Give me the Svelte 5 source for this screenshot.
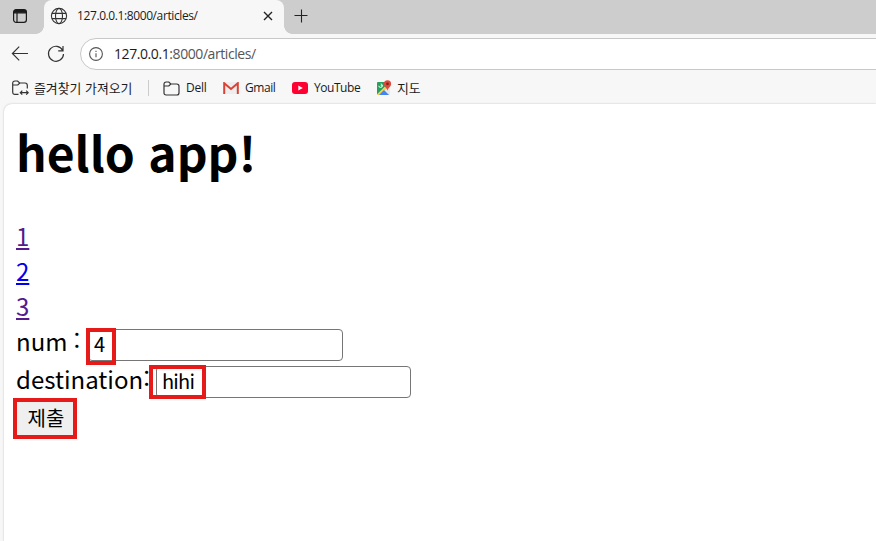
<script>
  const articles = [
    { id: 1, visited: true },
    { id: 2, visited: false },
    { id: 3, visited: true }
  ];
  let num = $state('4');
  let destination = $state('hihi');
</script>

<div class="browser">
  <header class="tabs">
    <svg class="workspace" width="16" height="16" viewBox="0 0 16 16" fill="none" stroke="#1b1b1b" stroke-width="1.2">
      <rect x="1.6" y="1.6" width="12.8" height="12.8" rx="2.6" />
      <path d="M2 3.4Q2 2 4 2h8q2 0 2 1.4v1.4H2z" fill="#1b1b1b" />
      <path d="M5 5v9" />
    </svg>
    <div class="tab">
      <svg width="18" height="18" viewBox="0 0 18 18" fill="none" stroke="#333" stroke-width="1.1">
        <circle cx="9" cy="9" r="7.6" />
        <ellipse cx="9" cy="9" rx="3.5" ry="7.6" />
        <path d="M2 6.4h14M2 11.6h14" />
      </svg>
      <span class="tab-title">127.0.0.1:8000/articles/</span>
      <svg class="close" width="10" height="10" viewBox="0 0 10 10" stroke="#222" stroke-width="1.4"><path d="M1 1l8 8M9 1L1 9" /></svg>
    </div>
    <svg class="plus" width="14" height="14" viewBox="0 0 14 14" stroke="#222" stroke-width="1.1"><path d="M7.5 .5v13M.5 6.5h13" /></svg>
  </header>

  <nav class="toolbar">
    <svg class="back" width="18" height="16" viewBox="0 0 18 16" fill="none" stroke="#333" stroke-width="1.2"><path d="M17 7.5H1.500M8.200 .7L1.400 7.500l6.800 6.800" /></svg>
    <svg class="reload" width="18" height="18" viewBox="0 0 18 18" fill="none" stroke="#333" stroke-width="1.2"><path d="M15.700 5.400A7.500 7.500 0 1 0 16.500 9M16 1v4.800h-4.800" /></svg>
    <div class="address">
      <svg width="14" height="14" viewBox="0 0 14 14" fill="none" stroke="#555" stroke-width="1.1"><circle cx="7" cy="7" r="6.4" /><path d="M7 6.200v4M7 3.800v1.300" /></svg>
      <span class="url"><b>127.0.0.1</b>:8000/articles/</span>
    </div>
  </nav>

  <nav class="bookmarks">
    <svg class="import" width="17" height="16" viewBox="0 0 17 16" fill="none" stroke="#333" stroke-width="1.2">
      <path d="M6.500 14.400H3q-2.300 0-2.300-2.300V3.300Q.7 1 3 1h2.600l2 2H13q2.300 0 2.300 2.300v3.200M1 5h4.800l2-2" />
      <path d="M8.500 12.700h7.500M10.300 10.700l-2 2 2 2M14.200 10.700l2 2-2 2" />
    </svg>
    <span class="ko label-import" lang="ko">즐겨찾기 가져오기</span>
    <i class="divider"></i>
    <svg class="folder" width="17" height="15" viewBox="0 0 17 15" fill="none" stroke="#333" stroke-width="1.2"><path d="M1 3.300Q1 1 3.200 1h2.600l2 2h5.900Q16 3 16 5.200v6.500Q16 14 13.800 14H3.200Q1 14 1 11.700zM1.200 5h4.600l2-2" /></svg>
    <span class="label-dell">Dell</span>
    <svg class="gmail" width="16" height="12" viewBox="0 0 16 12">
      <path d="M1 0h14v12H1z" fill="#eee" />
      <path d="M1.200 12V1.200L8 7l6.800-5.800V12" fill="none" stroke="#d94435" stroke-width="2" />
    </svg>
    <span class="label-gmail">Gmail</span>
    <svg class="youtube" width="16" height="12" viewBox="0 0 16 12"><rect width="16" height="12" rx="3" fill="#ff0033" /><path d="M6.300 3.400v5.200L10.800 6z" fill="#fff" /></svg>
    <span class="label-youtube">YouTube</span>
    <svg class="maps" width="16" height="16" viewBox="0 0 16 16">
      <rect x="1" y="2" width="13" height="13" rx="1" fill="#e8e8e8" />
      <path d="M1 3q0-1 1-1h8v4L1 14.500z" fill="#28a05b" />
      <path d="M1 14.400L9.500 6l1.800 1.800L4 15H2z" fill="#f8cf46" />
      <path d="M3 15l5-5 5 5z" fill="#4384ef" />
      <path d="M2.800 5.800a1.800 1.800 0 1 0 1.900-1.900M4.600 5.800h2" fill="none" stroke="#fff" stroke-width=".9" />
      <path d="M11.500 11c0-3-3.600-4-3.600-7.100a3.600 3.600 0 0 1 7.200 0c0 3.100-3.600 4.100-3.600 7.100z" fill="#df4b3c" />
      <circle cx="11.500" cy="3.900" r="1.300" fill="#7d231d" />
    </svg>
    <span class="ko label-maps" lang="ko">지도</span>
  </nav>

  <main lang="ko">
    <h1>hello app!</h1>
    <div class="links">
      {#each articles as article}
        <a href="#{article.id}" class:visited={article.visited}>{article.id}</a>
      {/each}
    </div>
    <form>
      <div class="row num-row">
        <label for="num">num<span class="colon spaced">:</span></label>
        <div class="field num-field"><input id="num" bind:value={num} /><span class="mark num-mark"></span></div>
      </div>
      <div class="row destination-row">
        <label for="destination">destination<span class="colon">:</span></label>
        <div class="field destination-field"><input id="destination" bind:value={destination} /><span class="mark destination-mark"></span></div>
      </div>
      <button type="button">제출</button>
    </form>
  </main>
</div>

<style>
  :global(body) { margin: 0; overflow: hidden; }
  .browser { width: 876px; height: 541px; overflow: hidden; display: flex; flex-direction: column; background: #f7f7f7; color: #1b1b1b; font: 12px/16px "Open Sans", "Noto Sans", "Noto Sans CJK KR", sans-serif; }
  svg { flex: none; display: block; }
  span { white-space: nowrap; }
  .tabs { height: 34px; flex: none; display: flex; background: #cdcdcd; }
  .workspace { margin: 8px 0 0 12px; }
  .tab { position: relative; box-sizing: border-box; width: 240px; height: 34px; margin-left: 16px; padding: 0 11px 2px 6px; display: flex; align-items: center; background: #f7f7f7; border-radius: 8px 8px 0 0; }
  .tab::before, .tab::after { content: ""; position: absolute; bottom: 0; width: 8px; height: 8px; }
  .tab::before { left: -8px; background: radial-gradient(circle at 0 0, #cdcdcd 7.5px, #f7f7f7 8px); }
  .tab::after { right: -8px; background: radial-gradient(circle at 100% 0, #cdcdcd 7.5px, #f7f7f7 8px); }
  .tab-title { margin-left: 9px; font-size: 12px; letter-spacing: -.4px; }
  .close { margin-left: auto; }
  .plus { margin: 9px 0 0 10px; }
  .toolbar { box-sizing: border-box; height: 38px; flex: none; display: flex; align-items: center; padding: 2px 0 0 11px; }
  .reload { margin-left: 18px; }
  .address { box-sizing: border-box; flex: 1; height: 32px; margin: 0 -4px 0 15px; padding-left: 8px; display: flex; align-items: center; border: 1px solid #c8c8c8; border-radius: 16px 0 0 16px; background: #fff; }
  .url { margin-left: 11px; font-size: 14px; letter-spacing: -.42px; color: #555; }
  .url b { font-weight: 400; color: #1b1b1b; }
  .bookmarks { height: 32px; flex: none; display: flex; align-items: center; padding-left: 12px; }
  .ko { font-family: "Noto Sans CJK KR", sans-serif; font-size: 12.9px; }
  .label-import { width: 99px; margin-left: 5px; }
  .divider { width: 1px; height: 16px; margin: 0 14px 0 15px; background: #ccc; }
  .label-dell { width: 22px; margin-left: 6px; letter-spacing: -.2px; }
  .gmail { margin-left: 15px; }
  .label-gmail { width: 31px; margin-left: 6px; letter-spacing: -.45px; }
  .youtube { margin-left: 16px; }
  .label-youtube { width: 47px; margin-left: 6px; letter-spacing: -.45px; }
  .maps { margin-left: 15px; }
  .label-maps { margin-left: 5px; }
  main { box-sizing: border-box; flex: 1; margin-left: 4px; padding: 12px 0 0 12px; background: #fff; border-radius: 8px 0 0 0; box-shadow: 0 0 2px #bbb; color: #000; font: 24px/35px "Noto Sans CJK KR", sans-serif; }
  h1 { margin: 0; font-size: 48px; line-height: 70px; font-weight: 700; }
  .links { margin-top: 32px; display: flex; flex-direction: column; align-items: flex-start; }
  .links a { color: #00e; text-decoration: underline; }
  .links a.visited { color: #551a8b; }
  form { margin: 0; }
  .row { display: flex; align-items: flex-start; }
  .row label { display: block; flex: none; white-space: nowrap; }
  .num-row { height: 38px; }
  .num-row label { width: 72px; }
  .spaced { margin-left: 6px; }
  .destination-row { height: 37px; }
  .destination-row label { width: 140px; }
  .colon { position: relative; top: -1px; }
  .field { position: relative; margin-top: 6px; }
  .destination-field { margin-top: 5px; }
  input { display: block; box-sizing: border-box; width: 255px; height: 32px; margin: 0; padding: 0 5px 3px; border: 1px solid #767676; border-radius: 4px; font: 20px/27px "Noto Sans CJK KR", sans-serif; letter-spacing: -.8px; color: #000; background: #fff; outline: 0; }
  .mark { position: absolute; box-sizing: border-box; border: 4px solid #e71a1a; }
  .num-mark { left: -2px; top: -1px; width: 30px; height: 37px; }
  .destination-mark { left: -7px; top: -1px; width: 57px; height: 34px; }
  button { display: block; box-sizing: border-box; width: 64px; height: 41px; margin: 0 0 0 -3px; padding: 0 0 1px 2px; border: 4px solid #e71a1a; background: #efefef; font: 20px/30px "Noto Sans CJK KR", sans-serif; color: #000; }
</style>
